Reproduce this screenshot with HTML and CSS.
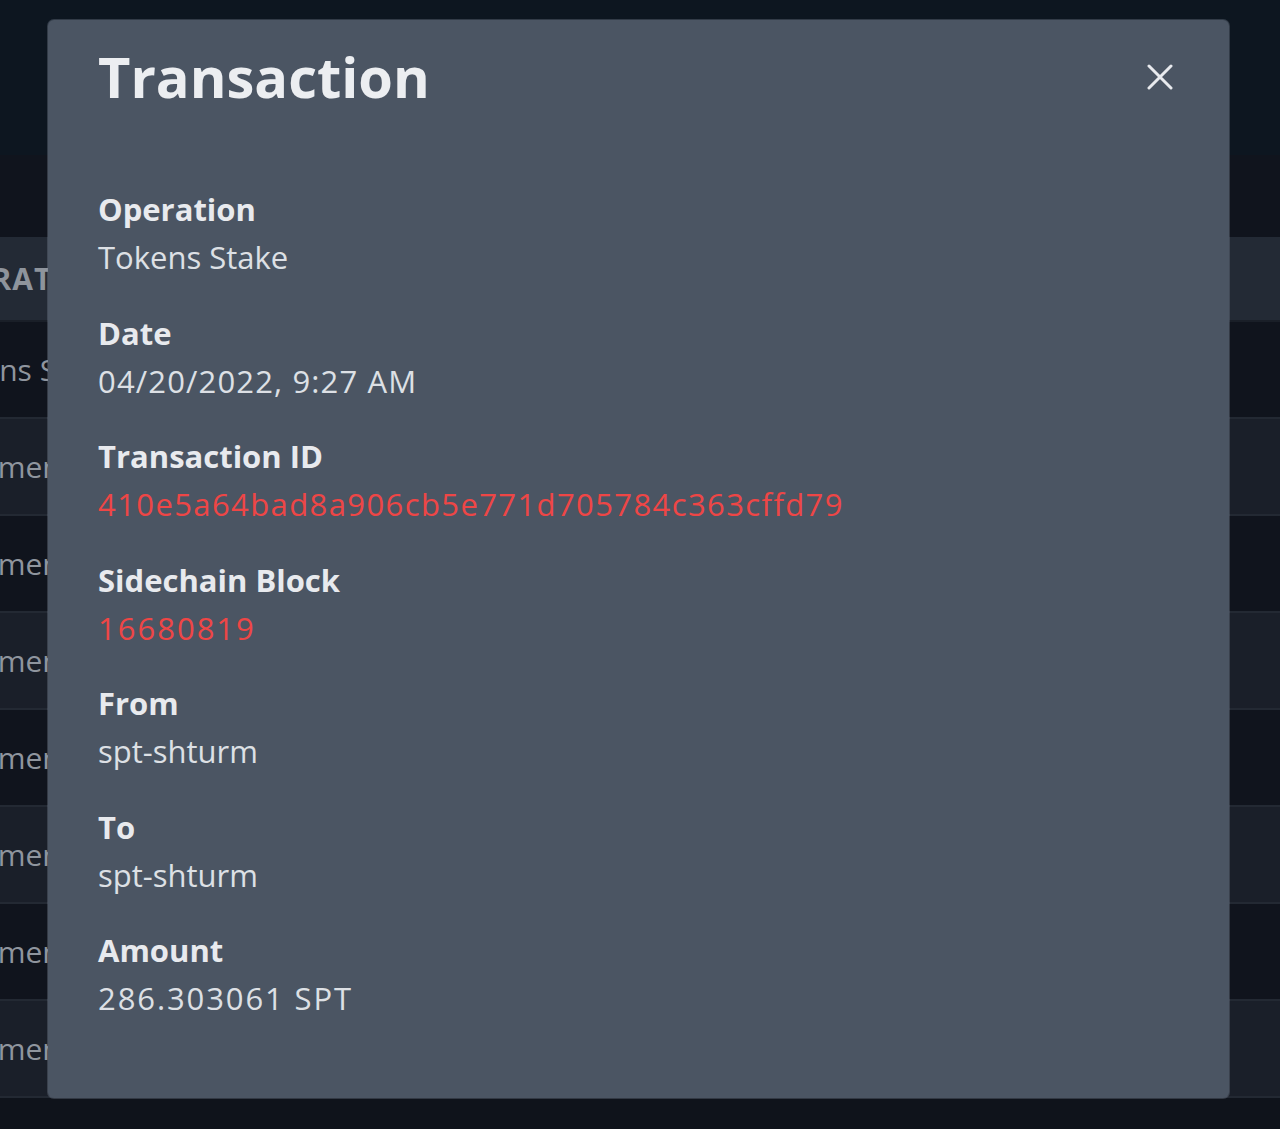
FILE: index.html
```html
<!DOCTYPE html>
<html lang="en">
<head>
<meta charset="utf-8">
<title>Transaction</title>
<link rel="stylesheet" href="styles.css">
</head>
<body>
<div class="page">
  <div class="topbar"></div>
  <div class="subbar"></div>
  <div class="table">
    <div class="row head"><span class="cell shift-head">OPERATION</span></div>
    <div class="row dark"><span class="cell shift-tok">Tokens Stake</span></div>
    <div class="row light"><span class="cell shift-pay">Payment</span></div>
    <div class="row dark"><span class="cell shift-pay">Payment</span></div>
    <div class="row light"><span class="cell shift-pay">Payment</span></div>
    <div class="row dark"><span class="cell shift-pay">Payment</span></div>
    <div class="row light"><span class="cell shift-pay">Payment</span></div>
    <div class="row dark"><span class="cell shift-pay">Payment</span></div>
    <div class="row light"><span class="cell shift-pay">Payment</span></div>
  </div>
  <div class="footer"></div>
</div>

<div class="modal">
  <div class="modal-header">
    <h1 class="modal-title">Transaction</h1>
    <button class="close" aria-label="Close">
      <svg width="26" height="26" viewBox="0 0 26 26"><path d="M2 2 L24 24 M24 2 L2 24" stroke="#e8eaee" stroke-width="3" stroke-linecap="round"/></svg>
    </button>
  </div>
  <div class="modal-body">
    <div class="field"><div class="label">Operation</div><div class="value">Tokens Stake</div></div>
    <div class="field"><div class="label">Date</div><div class="value num-date">04/20/2022, 9:27 AM</div></div>
    <div class="field"><div class="label">Transaction ID</div><div class="value link num-id">410e5a64bad8a906cb5e771d705784c363cffd79</div></div>
    <div class="field"><div class="label">Sidechain Block</div><div class="value link num-block">16680819</div></div>
    <div class="field"><div class="label">From</div><div class="value">spt-shturm</div></div>
    <div class="field"><div class="label">To</div><div class="value">spt-shturm</div></div>
    <div class="field"><div class="label">Amount</div><div class="value num-amt">286.303061 SPT</div></div>
  </div>
</div>
</body>
</html>
```
FILE: styles.css
```css
* { box-sizing: border-box; }
html, body { margin: 0; padding: 0; }
body {
  background: #0f131b;
  font-family: "Open Sans", "Noto Sans", sans-serif;
  width: 1280px;
  height: 1129px;
  overflow: hidden;
  position: relative;
}
.page { display: flex; flex-direction: column; }
.topbar { height: 155px; background: #0d1620; }
.subbar { height: 82px; background: #10141d; }
.table { display: flex; flex-direction: column; }
.row {
  height: 97px;
  display: flex;
  align-items: center;
  border-bottom: 2px solid #232933;
  overflow: hidden;
  white-space: nowrap;
}
.row.head { height: 85px; background: #232a35; border-bottom: 2px solid #1a1f28; }
.row.dark { background: #10141d; }
.row.light { background: #1a1f29; }
.cell { font-size: 30px; color: #8f959e; }
.row.head .cell { font-weight: 700; color: #8e949c; letter-spacing: 1px; }
.shift-head { margin-left: -71px; }
.shift-tok { margin-left: -68px; }
.shift-pay { margin-left: -52px; }
.footer { flex: 1; background: #0f131b; }

.modal {
  position: absolute;
  left: 48px;
  top: 20px;
  width: 1181px;
  height: 1078px;
  background: #4b5563;
  border-radius: 6px;
  box-shadow: 0 0 0 1px rgba(120,130,145,0.35);
  padding: 22px 56px 0 50px;
}
.modal-header {
  display: flex;
  align-items: center;
  justify-content: space-between;
}
.modal-title {
  margin: 0;
  font-size: 56px;
  line-height: 68px;
  font-weight: 700;
  color: #eceef1;
}
.close {
  background: none;
  border: 0;
  padding: 0;
  width: 26px;
  height: 26px;
  display: flex;
  margin-top: 2px;
}
.modal-body {
  margin-top: 75px;
  display: flex;
  flex-direction: column;
  gap: 27.5px;
}
.field { display: flex; flex-direction: column; }
.label {
  font-size: 31px;
  line-height: 48px;
  font-weight: 700;
  color: #e8eaee;
}
.value {
  font-size: 31px;
  line-height: 48px;
  color: #dde0e5;
}
.value.num-date { letter-spacing: 1.15px; }
.value.num-amt { letter-spacing: 1.9px; }
.value.num-block { letter-spacing: 2px; }
.value.num-id { letter-spacing: 1.4px; }
.value.link { color: #ee4646; }
```
